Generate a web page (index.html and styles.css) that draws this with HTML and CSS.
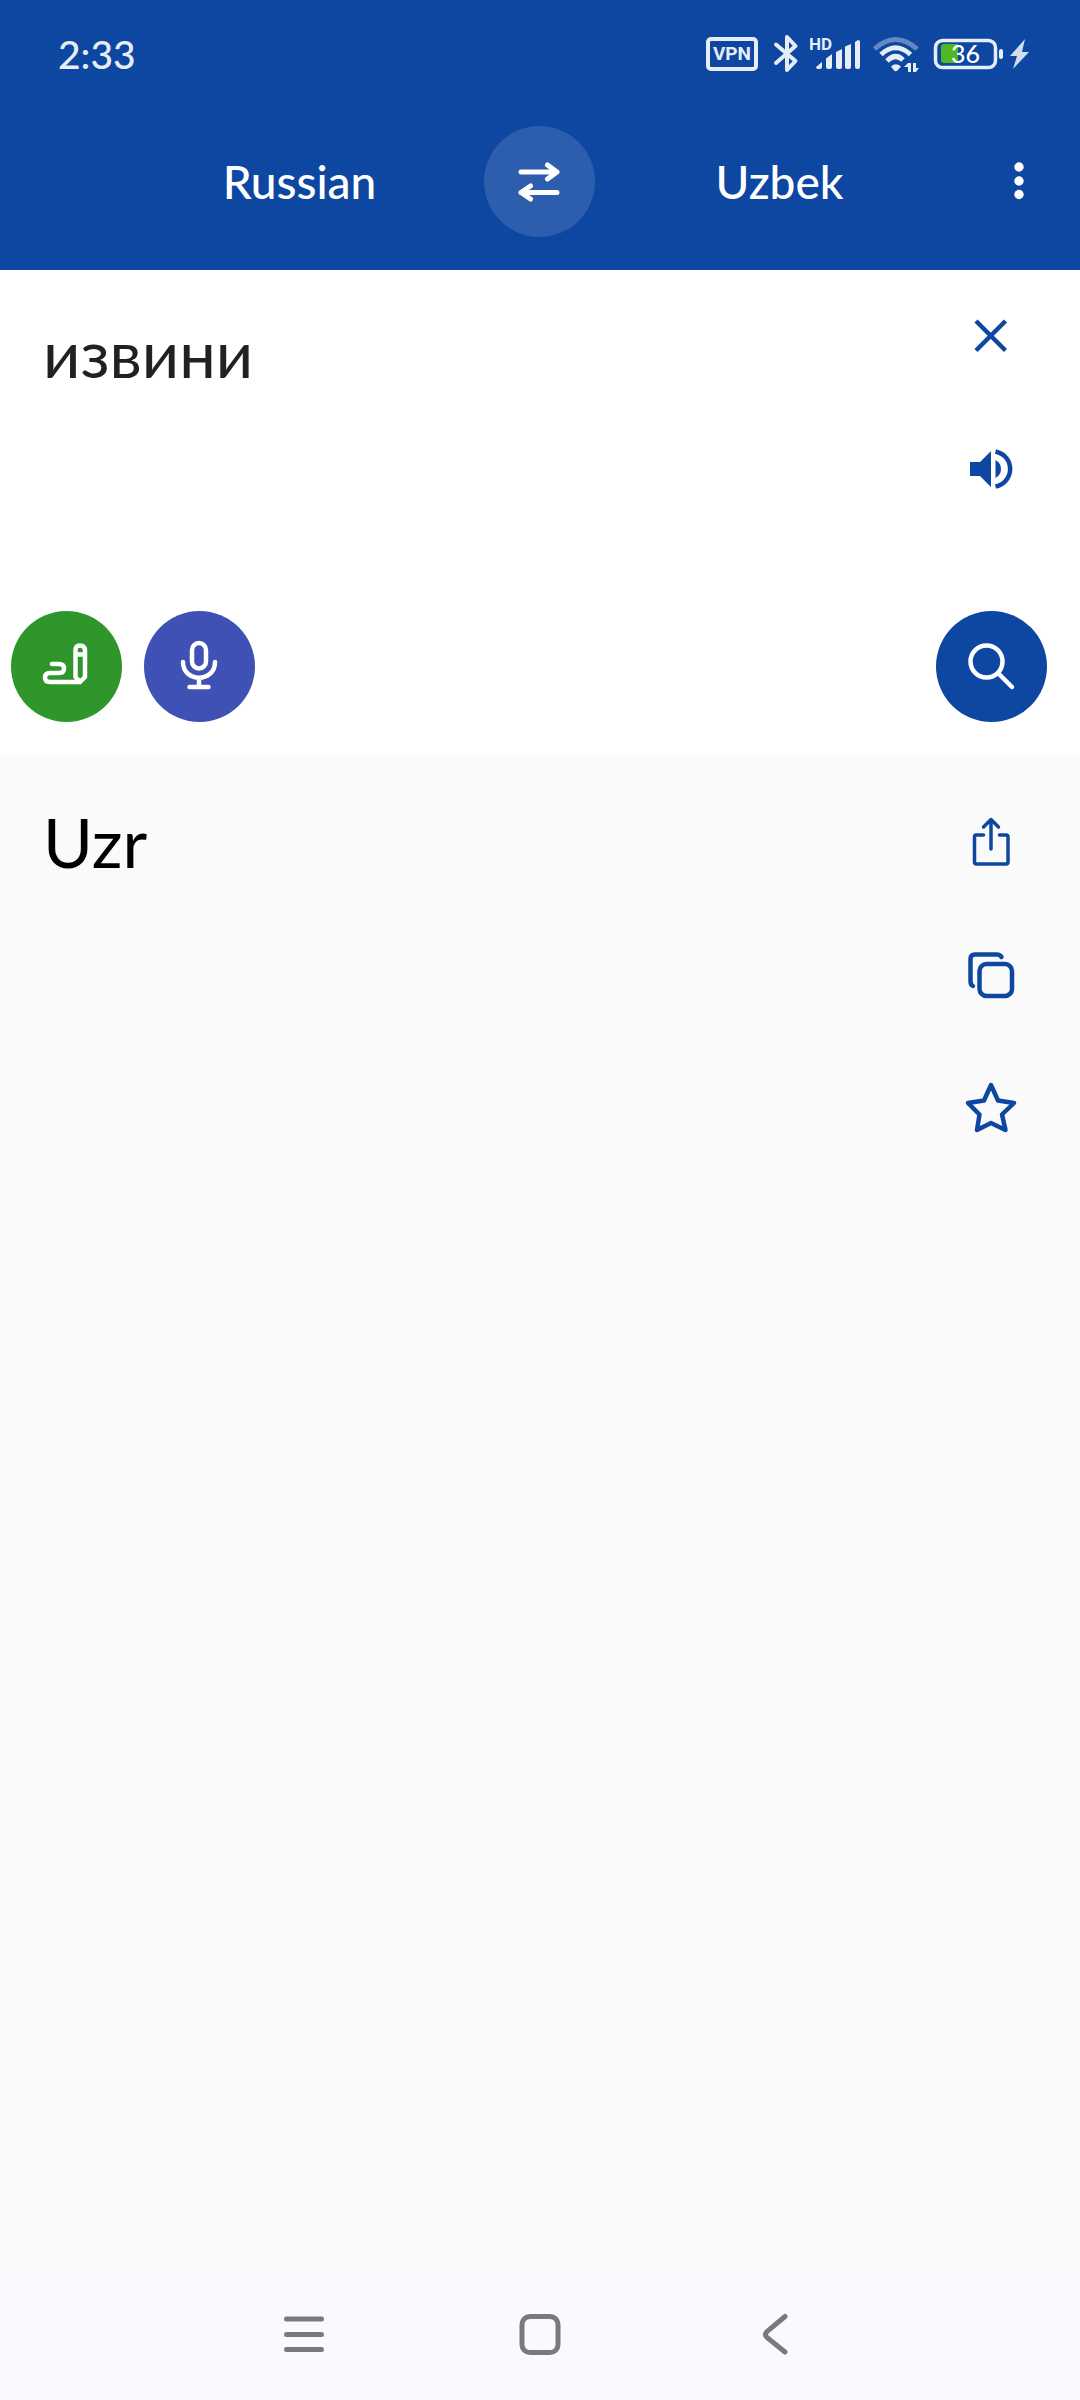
FILE: index.html
```html
<!DOCTYPE html>
<html lang="en">

    <head>
        <meta charset="utf-8">
        <meta name="viewport" content="width=device-width, initial-scale=1">
        <title>Russian - Uzbek translator</title>
        <link rel="stylesheet" href="styles.css">
    </head>

    <body>
        <header class="header">
            <div class="status">
                <span class="time">2:33</span>
                <div class="status-icons">
                    <span class="vpn">VPN</span>
                    <!-- bluetooth -->
                    <svg width="32" height="40" viewBox="0 0 32 40" fill="none" stroke="currentColor" stroke-width="4" stroke-linecap="round" stroke-linejoin="round">
                        <path d="M8 10.500L27.500 27L19 36V3L27.500 12L8 29"/>
                    </svg>
                    <!-- mobile signal -->
                    <svg width="51" height="40" viewBox="0 0 51 40" fill="currentColor">
                        <text class="hd" x="-1" y="16">HD</text>
                        <path d="M6 33L12 28V33Q12 35 10 35H8Q6 35 6 33ZM16 24.500L22 20V33Q22 35 20 35H18Q16 35 16 33ZM26 18L32 15V33Q32 35 30 35H28Q26 35 26 33ZM35 12.500L41 10V33Q41 35 39 35H37Q35 35 35 33ZM45 8L48 6Q50 6 50 8V33Q50 35 48 35H47Q45 35 45 33Z"/>
                    </svg>
                    <!-- wifi -->
                    <svg width="50" height="40" viewBox="0 0 50 40" fill="none" stroke="currentColor" stroke-width="5">
                        <path d="M3.500 15Q24.500 -4 46 15" opacity=".4"/>
                        <path d="M10 20.500Q24.500 7 39.500 20.500"/>
                        <path d="M16 27Q24.500 18.500 32 26"/>
                        <path d="M20 32.500Q24.500 28 30 32.500L26.500 36.500Q24.500 38 23 36.500Z" fill="currentColor" stroke="none"/>
                        <path d="M33 33L37 29H40V38H37V33ZM42 29H45V34H48L45 38H42Z" fill="currentColor" stroke="none"/>
                    </svg>
                    <!-- battery -->
                    <svg width="100" height="40" viewBox="0 0 100 40">
                        <rect x="4.500" y="6.500" width="60" height="27" rx="7" fill="none" stroke="currentColor" stroke-width="3.500"/>
                        <path d="M13 10H27V29H13Q10 29 10 26V13Q10 10 13 10Z" fill="#4fb823"/>
                        <rect x="68" y="15" width="4" height="10" rx="2" fill="currentColor"/>
                        <text class="charge" x="34.500" y="29" text-anchor="middle">36</text>
                        <path d="M94 5L79 22H86L82 35L98 18H91Z" fill="currentColor" opacity=".9"/>
                    </svg>
                </div>
            </div>
            <div class="toolbar">
                <button class="language">Russian</button>
                <button class="round swap" aria-label="Swap languages">
                    <svg width="49" height="49" viewBox="0 0 49 49" fill="none" stroke="currentColor" stroke-width="5" stroke-linecap="round" stroke-linejoin="round">
                        <path d="M6 15H42M32.500 8L42 15L32.500 22M42 35.500H6M15.500 29L6 35.500L15.500 42"/>
                    </svg>
                </button>
                <button class="language">Uzbek</button>
                <button class="round" aria-label="More options">
                    <svg width="49" height="49" viewBox="0 0 49 49" fill="currentColor">
                        <circle cx="24" cy="10" r="4.700"/>
                        <circle cx="24" cy="24" r="4.700"/>
                        <circle cx="24" cy="37.500" r="4.700"/>
                    </svg>
                </button>
            </div>
        </header>

        <main class="main">
            <section class="source">
                <div class="row">
                    <textarea class="source-text" lang="ru" aria-label="Text to translate" spellcheck="false">извини</textarea>
                    <div class="actions">
                        <button class="round" aria-label="Clear text">
                            <svg width="57" height="57" viewBox="0 0 57 57" fill="none" stroke="currentColor" stroke-width="4.500">
                                <path d="M13 13L42.500 42.500M42.500 13L13 42.500"/>
                            </svg>
                        </button>
                        <button class="round" aria-label="Listen">
                            <svg width="57" height="57" viewBox="0 0 57 57" fill="currentColor">
                                <path d="M7 21H17L28 10V46L17 35H7Z"/>
                                <path d="M32.500 19Q38 22 38 28T32.500 37Z"/>
                                <path d="M32.500 10.500C52 15 52 41 32.500 45.500" fill="none" stroke="currentColor" stroke-width="4.500"/>
                            </svg>
                        </button>
                    </div>
                </div>
                <div class="buttons">
                    <button class="round write" aria-label="Handwriting">
                        <svg width="57" height="57" viewBox="0 0 57 57" fill="none" stroke="currentColor" stroke-width="4.500" stroke-linecap="round" stroke-linejoin="round">
                            <path d="M14 26H21Q26 26 26 30.500T21 35H12Q7 35 7 39.500T12 44H42L47 39V13Q47 7.500 42 7.500T37.500 13V39L42 44M37.500 16.500H47"/>
                        </svg>
                    </button>
                    <button class="round speak" aria-label="Voice input">
                        <svg width="57" height="57" viewBox="0 0 57 57" fill="none" stroke="currentColor" stroke-width="4.500" stroke-linecap="round">
                            <rect x="21" y="5" width="14" height="25.500" rx="7"/>
                            <path d="M12 24C12 45 44 45 44 24M28 41V48M18.500 49H37.500"/>
                        </svg>
                    </button>
                    <button class="round search" aria-label="Translate">
                        <svg width="57" height="57" viewBox="0 0 57 57" fill="none" stroke="currentColor" stroke-width="4.500" stroke-linecap="round">
                            <circle cx="23.500" cy="23.500" r="16"/>
                            <path d="M36 36L49 49"/>
                        </svg>
                    </button>
                </div>
            </section>

            <section class="result">
                <p class="result-text" lang="uz">Uzr</p>
                <div class="actions">
                    <button class="round" aria-label="Share">
                        <svg width="57" height="57" viewBox="0 0 57 57" fill="none" stroke="currentColor" stroke-width="3.500" stroke-linecap="round" stroke-linejoin="round">
                            <path d="M20.500 21H13Q11.500 21 11.500 23V48Q11.500 50 13.500 50H43Q45 50 45 48V23Q45 21 43 21H36.500M28 35V5.500M20.500 13L28 5.500L35.500 13"/>
                        </svg>
                    </button>
                    <button class="round" aria-label="Copy">
                        <svg width="57" height="57" viewBox="0 0 57 57" fill="none" stroke="currentColor" stroke-width="4.500" stroke-linecap="round">
                            <rect x="16.500" y="17" width="32.500" height="32" rx="7"/>
                            <path d="M38.500 10Q37 7.500 34 7.500H12Q7.500 7.500 7.500 12V34Q7.500 38 10 39"/>
                        </svg>
                    </button>
                    <button class="round" aria-label="Add to favorites">
                        <svg width="57" height="57" viewBox="0 0 57 57" fill="none" stroke="currentColor" stroke-width="4.500" stroke-linejoin="round">
                            <path d="M28 5L35 20.500L51 23L39 34.500L42.500 50L28 43L14 50L16.500 34.500L5 23L21 20.500Z"/>
                        </svg>
                    </button>
                </div>
            </section>
        </main>

        <nav class="nav">
            <button class="nav-button" aria-label="Recent apps">
                <svg width="49" height="49" viewBox="0 0 49 49" fill="none" stroke="currentColor" stroke-width="5" stroke-linecap="round">
                    <path d="M6.500 9H41.500M6.500 24.500H41.500M6.500 39.500H41.500"/>
                </svg>
            </button>
            <button class="nav-button" aria-label="Home">
                <svg width="49" height="49" viewBox="0 0 49 49" fill="none" stroke="currentColor" stroke-width="5">
                    <rect x="6" y="6.500" width="36" height="36" rx="8"/>
                </svg>
            </button>
            <button class="nav-button" aria-label="Back">
                <svg width="49" height="49" viewBox="0 0 49 49" fill="none" stroke="currentColor" stroke-width="5" stroke-linecap="round">
                    <path d="M33 6.500L15 21.500Q12 24.500 15 27.500L33 42"/>
                </svg>
            </button>
        </nav>
    </body>

</html>
```
FILE: styles.css
```css
* {
    box-sizing: border-box;
}

body {
    display: flex;
    flex-direction: column;
    min-height: 100vh;
    margin: 0;
    background-color: #fafafa;
    font-family: Lato, "Open Sans", sans-serif;
}

button {
    padding: 0;
    border: 0;
    background: none;
    color: inherit;
    font: inherit;
    cursor: pointer;
}

svg {
    display: block;
    flex: none;
}

/* header */
.header {
    background-color: #0d47a1;
    color: #fff;
}

.status {
    display: flex;
    align-items: center;
    justify-content: space-between;
    height: 108px;
    padding: 0 49px 0 58px;
    color: #e7edf6;
}

.time {
    font-size: 39px;
    font-weight: 500;
}

.status-icons {
    display: flex;
    align-items: center;
    gap: 10px;
}

.vpn {
    width: 52px;
    border: 4px solid;
    border-radius: 5px;
    font: bold 19px/26px Roboto, sans-serif;
    text-align: center;
}

.hd {
    font: bold 17px Roboto, sans-serif;
}

.charge {
    fill: #fff;
    font: 500 25px Lato, sans-serif;
}

.toolbar {
    display: grid;
    grid-template-columns: 1fr 111px 1fr 111px;
    align-items: center;
    padding: 18px 5px 33px 115px;
}

.language {
    font-size: 46px;
    font-weight: 500;
    line-height: 60px;
}

.round {
    display: flex;
    align-items: center;
    justify-content: center;
    width: 111px;
    height: 111px;
    border-radius: 50%;
}

.swap {
    background-color: rgba(255, 255, 255, 0.13);
}

/* text to translate */
.main {
    flex: 1;
}

.source {
    padding: 11px 33px 33px 11px;
    background-color: #fff;
}

.row {
    display: flex;
}

.source-text {
    flex: 1;
    min-width: 0;
    padding: 32px 22px 0 32px;
    border: 0;
    outline: 0;
    resize: none;
    background: none;
    color: #212121;
    font: 400 65px/80px Lato, "Open Sans", sans-serif;
}

.actions {
    display: flex;
    flex-direction: column;
    gap: 22px;
    color: #0d47a1;
}

.buttons {
    display: flex;
    gap: 22px;
    margin-top: 86px;
    color: #fff;
}

.write {
    background-color: #2e962a;
}

.speak {
    background-color: #3f51b5;
}

.search {
    margin-left: auto;
    background-color: #0d47a1;
}

/* translation */
.result {
    display: flex;
    justify-content: space-between;
    padding: 32px 33px 33px 43px;
}

.result-text {
    margin: 15px 0 0;
    color: #000;
    font-size: 68px;
    font-weight: 400;
    line-height: 80px;
}

/* system buttons */
.nav {
    display: flex;
    align-items: center;
    justify-content: center;
    gap: 187px;
    height: 131px;
    background-color: #faf9ff;
    color: #7a7a7c;
}
```
